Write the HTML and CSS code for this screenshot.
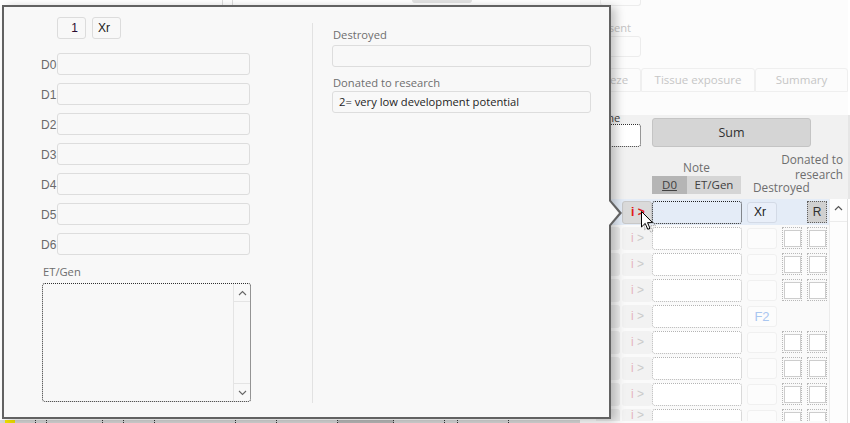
FILE: index.html
```html
<!DOCTYPE html>
<html lang="en">
<head>
  <meta charset="UTF-8">
  <title>Embryo details</title>
  <link rel="stylesheet" href="styles.css">
</head>
<body>
  <div class="app">
    <!-- main area, mostly under the popup -->
    <div class="main">
      <div class="main-top">
        <span class="rule rule-a"></span>
        <span class="rule rule-b"></span>
        <span class="top-btn"></span>
      </div>
      <div class="main-body"></div>
      <div class="main-strip">
        <span class="strip-cell yellow"></span>
        <span class="strip-cell" style="width: 20px"></span>
        <span class="strip-cell" style="width: 10px"></span>
        <span class="strip-cell" style="width: 55px"></span>
        <span class="strip-cell" style="width: 20px"></span>
        <span class="strip-cell" style="width: 30px"></span>
        <span class="strip-cell" style="width: 80px"></span>
        <span class="strip-cell" style="width: 40px"></span>
        <span class="strip-cell" style="width: 60px"></span>
        <span class="strip-cell dark" style="width: 55px"></span>
        <span class="strip-cell" style="width: 50px"></span>
        <span class="strip-cell" style="width: 12px"></span>
        <span class="strip-cell" style="width: 50px"></span>
      </div>
    </div>

    <!-- right side panel -->
    <div class="side">
      <div class="side-top">
        <div class="stub"></div>
        <div class="consent-label">Consent</div>
        <div class="consent-input"></div>
        <div class="tabs">
          <div class="tab" style="width: 61px">Freeze</div>
          <div class="tab" style="width: 114px">Tissue exposure</div>
          <div class="tab" style="width: 93px">Summary</div>
        </div>
      </div>

      <div class="side-mid">
        <div class="mid-row">
          <div class="name-block">
            <div class="name-label">Name</div>
            <div class="name-input"></div>
          </div>
          <div class="sum-btn">Sum</div>
        </div>
        <div class="head-row">
          <div class="note-block">
            <div class="note-title">Note</div>
            <div class="toggle">
              <span class="toggle-on">D0</span>
              <span class="toggle-off">ET/Gen</span>
            </div>
          </div>
          <div class="heads">
            <div class="donated-head">Donated to<br>research</div>
            <div class="destroyed-head">Destroyed</div>
          </div>
        </div>
      </div>

      <div class="table">
        <div class="rows">
          <div class="row selected">
            <span class="lead"></span>
            <span class="info"><b>i</b> &gt;</span>
            <span class="note"></span>
            <span class="mark">Xr</span>
            <span class="chk blank"></span>
            <span class="chk r-btn">R</span>
          </div>
          <div class="row">
            <span class="lead"></span>
            <span class="info"><b>i</b> &gt;</span>
            <span class="note"></span>
            <span class="mark"></span>
            <span class="chk"><i></i></span>
            <span class="chk"><i></i></span>
          </div>
          <div class="row">
            <span class="lead"></span>
            <span class="info"><b>i</b> &gt;</span>
            <span class="note"></span>
            <span class="mark"></span>
            <span class="chk"><i></i></span>
            <span class="chk"><i></i></span>
          </div>
          <div class="row">
            <span class="lead"></span>
            <span class="info"><b>i</b> &gt;</span>
            <span class="note"></span>
            <span class="mark"></span>
            <span class="chk"><i></i></span>
            <span class="chk"><i></i></span>
          </div>
          <div class="row">
            <span class="lead"></span>
            <span class="info"><b>i</b> &gt;</span>
            <span class="note"></span>
            <span class="mark f2">F2</span>
          </div>
          <div class="row">
            <span class="lead"></span>
            <span class="info"><b>i</b> &gt;</span>
            <span class="note"></span>
            <span class="mark"></span>
            <span class="chk"><i></i></span>
            <span class="chk"><i></i></span>
          </div>
          <div class="row">
            <span class="lead"></span>
            <span class="info"><b>i</b> &gt;</span>
            <span class="note"></span>
            <span class="mark"></span>
            <span class="chk"><i></i></span>
            <span class="chk"><i></i></span>
          </div>
          <div class="row">
            <span class="lead"></span>
            <span class="info"><b>i</b> &gt;</span>
            <span class="note"></span>
            <span class="mark"></span>
            <span class="chk"><i></i></span>
            <span class="chk"><i></i></span>
          </div>
          <div class="row last">
            <span class="lead"></span>
            <span class="info"><b>i</b> &gt;</span>
            <span class="note"></span>
            <span class="mark"></span>
            <span class="chk"><i></i></span>
            <span class="chk"><i></i></span>
          </div>
        </div>
        <div class="vscroll">
          <div class="vscroll-up">
            <svg width="9" height="6" viewBox="0 0 9 6"><path d="M1 5 L4.5 1.5 L8 5" fill="none" stroke="#555" stroke-width="1.2"/></svg>
          </div>
        </div>
      </div>
    </div>
  </div>

  <!-- details popup -->
  <div class="popup">
    <div class="pop-left">
      <div class="pop-btns">
        <span class="small-btn num">1</span>
        <span class="small-btn xr">Xr</span>
      </div>
      <div class="day-grid">
        <span class="day-label">D0</span><span class="field"></span>
        <span class="day-label">D1</span><span class="field"></span>
        <span class="day-label">D2</span><span class="field"></span>
        <span class="day-label">D3</span><span class="field"></span>
        <span class="day-label">D4</span><span class="field"></span>
        <span class="day-label">D5</span><span class="field"></span>
        <span class="day-label">D6</span><span class="field"></span>
      </div>
      <div class="memo-label">ET/Gen</div>
      <div class="memo">
        <div class="memo-text"></div>
        <div class="memo-scroll">
          <span class="memo-arrow">
            <svg width="9" height="6" viewBox="0 0 9 6"><path d="M1 5 L4.5 1.5 L8 5" fill="none" stroke="#666" stroke-width="1.1"/></svg>
          </span>
          <span class="memo-track"></span>
          <span class="memo-arrow down">
            <svg width="9" height="6" viewBox="0 0 9 6"><path d="M1 1 L4.5 4.5 L8 1" fill="none" stroke="#666" stroke-width="1.1"/></svg>
          </span>
        </div>
      </div>
    </div>
    <div class="pop-divider"></div>
    <div class="pop-right">
      <div class="pop-label">Destroyed</div>
      <div class="wide-field"></div>
      <div class="pop-label second">Donated to research</div>
      <div class="wide-field filled">2= very low development potential</div>
    </div>
  </div>

  <!-- mouse pointer -->
  <svg class="pointer" width="16" height="22" viewBox="0 0 16 22">
    <path d="M3.5 3.5 L3.5 19 L7.2 15.4 L9.8 21.3 L12 20.3 L9.5 14.6 L14.5 14.6 Z" fill="none" stroke="#9a9a9a" stroke-width="1" stroke-dasharray="1 1"/>
    <path d="M0.5 0.5 L0.5 16 L4.2 12.4 L6.8 18.3 L9 17.3 L6.5 11.6 L11.5 11.6 Z" fill="#fff" stroke="#000" stroke-width="1"/>
  </svg>
</body>
</html>
```

FILE: styles.css
```css
  body {
    margin: 0;
    width: 850px;
    height: 423px;
    overflow: hidden;
    background: #ffffff;
    font-family: 'Open Sans', 'Liberation Sans', sans-serif;
    font-size: 11.2px;
    color: #6e6e6e;
    position: relative;
  }

  .app {
    display: flex;
    height: 423px;
  }

  /* main area */
  .main {
    width: 580px;
    display: flex;
    flex-direction: column;
  }

  .main-top {
    display: flex;
    height: 5px;
  }

  .rule {
    width: 1px;
    background: #dcdcdc;
  }

  .rule-a { margin-left: 222px; }
  .rule-b { margin-left: 9px; }

  .top-btn {
    margin-left: 179px;
    width: 60px;
    height: 3px;
    background: #e2e2e2;
    border-radius: 0 0 3px 3px;
  }

  .main-body {
    flex: 1;
  }

  .main-strip {
    display: flex;
    height: 3px;
    background: #d6d6d6;
  }

  .strip-cell {
    border-right: 1px dotted #333;
  }

  .strip-cell.yellow {
    width: 10px;
    margin-left: 5px;
    background: #f2e200;
    border-right: none;
  }

  .strip-cell.dark {
    background: #b8b8b8;
  }

  /* right side panel */
  .side {
    width: 270px;
    display: flex;
    flex-direction: column;
  }

  .side-top {
    height: 115px;
    background: #fcfcfc;
    box-sizing: border-box;
    border-right: 2px solid #fff;
  }

  .stub {
    margin-left: 20px;
    width: 41px;
    height: 6px;
    box-sizing: border-box;
    border: 1px solid #ececec;
    border-top: none;
    border-radius: 0 0 3px 3px;
  }

  .consent-label {
    margin: 14px 0 0 8px;
    line-height: 15px;
    color: #c4c4c4;
  }

  .consent-input {
    margin: 1px 0 0 20px;
    width: 41px;
    height: 21px;
    box-sizing: border-box;
    border: 1px solid #ececec;
    border-radius: 3px;
  }

  .tabs {
    display: flex;
    margin-top: 11px;
    height: 24px;
  }

  .tab {
    box-sizing: border-box;
    border: 1px solid #efefef;
    border-radius: 3px 3px 0 0;
    text-align: center;
    line-height: 22px;
    color: #c6c6c6;
    font-size: 11.5px;
  }

  .side-mid {
    height: 84px;
    background: #f1f1f1;
    border-right: 2px solid #e6e6e6;
  }

  .mid-row {
    display: flex;
    height: 35px;
  }

  .name-block {
    width: 72px;
  }

  .name-label {
    margin: -4px 0 0 9px;
    line-height: 13px;
    color: #404040;
  }

  .name-input {
    margin-left: 20px;
    width: 41px;
    height: 23px;
    box-sizing: border-box;
    border: 1px dotted #303030;
    border-radius: 3px;
    background: #ffffff;
  }

  .sum-btn {
    margin-top: 3px;
    width: 159px;
    height: 29px;
    box-sizing: border-box;
    background: #d5d5d5;
    border: 1px solid #c4c4c4;
    border-radius: 3px;
    text-align: center;
    line-height: 27px;
    font-size: 12.5px;
    color: #303030;
  }

  .head-row {
    display: flex;
    height: 49px;
    box-sizing: border-box;
    padding-bottom: 5px;
  }

  .note-block {
    margin-left: 72px;
    width: 89px;
    align-self: flex-end;
  }

  .note-title {
    text-align: center;
    line-height: 15px;
    font-size: 11.8px;
  }

  .toggle {
    display: flex;
    margin-top: 1px;
    height: 18px;
    line-height: 18px;
    font-size: 11.5px;
    color: #404040;
  }

  .toggle-on {
    width: 35px;
    text-align: center;
    background: #b5b5b5;
    text-decoration: underline;
  }

  .toggle-off {
    flex: 1;
    text-align: center;
    background: #d5d5d5;
  }

  .heads {
    flex: 1;
    display: flex;
    flex-direction: column;
    padding-top: 2px;
  }

  .donated-head {
    text-align: right;
    padding-right: 5px;
    line-height: 15px;
    font-size: 11.8px;
  }

  .destroyed-head {
    margin: -2px 0 0 12px;
    line-height: 14px;
    font-size: 11.8px;
  }

  /* table rows */
  .table {
    flex: 1;
    display: flex;
    overflow: hidden;
  }

  .rows {
    width: 249px;
    background: #fafafa;
    font-family: 'Liberation Sans', Arial, sans-serif;
    font-size: 12px;
  }

  .row {
    display: flex;
    align-items: flex-start;
    height: 26px;
    box-sizing: border-box;
    padding-top: 2px;
  }

  .row.last {
    height: 14px;
    overflow: hidden;
  }

  .row.selected {
    background: #e4ecf7;
  }

  .lead {
    margin-left: 16px;
    width: 24px;
    height: 23px;
    background: #ececec;
    border-radius: 3px;
  }

  .row.selected .lead {
    background: transparent;
  }

  .info {
    margin-left: 2px;
    width: 30px;
    height: 23px;
    box-sizing: border-box;
    padding-left: 9px;
    line-height: 23px;
    background: #f2f2f2;
    border-radius: 3px;
    color: #cacaca;
  }

  .row.last .info {
    height: 12px;
    line-height: 12px;
    padding-top: 0;
    border-radius: 3px 3px 0 0;
  }

  .info b {
    font-weight: normal;
    color: #e6b4c0;
  }

  .row.selected .info {
    background: #dadada;
    border: 1px solid #c8c8c8;
    padding-left: 8px;
    line-height: 21px;
    color: #e01818;
    font-weight: bold;
  }

  .row.selected .info b {
    font-weight: bold;
    color: #e01818;
  }

  .note {
    width: 90px;
    height: 23px;
    box-sizing: border-box;
    border: 1px dotted #b4b4b4;
    border-radius: 3px;
    background: #ffffff;
  }

  .row.selected .note {
    border-color: #202020;
    background: transparent;
  }

  .mark {
    margin: 1px 0 0 5px;
    width: 30px;
    height: 21px;
    box-sizing: border-box;
    border: 1px solid #f0f0f0;
    border-radius: 3px;
    background: #fcfcfc;
    text-align: center;
    line-height: 19px;
  }

  .row.selected .mark {
    background: #e9eff9;
    border-color: #d3dae6;
    color: #1a1a1a;
    text-align: left;
    padding-left: 6px;
  }

  .mark.f2 {
    color: #a9c6f0;
    font-size: 13px;
  }

  .chk {
    margin-left: 5px;
    width: 20px;
    height: 22px;
    box-sizing: border-box;
    border: 1px dotted #b8b8b8;
    display: flex;
    align-items: center;
    justify-content: center;
  }

  .chk i {
    width: 17px;
    height: 17px;
    box-sizing: border-box;
    border: 1px solid #cdcdcd;
    background: #ffffff;
  }

  .chk.blank {
    border-color: transparent;
  }

  .chk.r-btn {
    border-color: #606060;
    background: #d0d0d0;
    color: #303030;
    font-size: 12px;
  }

  .vscroll {
    width: 19px;
    box-sizing: border-box;
    border-left: 1px solid #ebebeb;
    border-right: 1px solid #e0e0e0;
    background: #fdfdfd;
    margin-right: 2px;
  }

  .vscroll-up {
    margin-top: 1px;
    height: 22px;
    border-bottom: 1px solid #ececec;
    display: flex;
    align-items: flex-start;
    justify-content: center;
    padding-top: 5px;
    box-sizing: border-box;
  }

  /* popup */
  .popup {
    position: absolute;
    left: 2px;
    top: 5px;
    width: 609px;
    height: 414px;
    box-sizing: border-box;
    border: 2px solid #626262;
    background: #f8f8f8;
    box-shadow: 5px 2px 9px rgba(0, 0, 0, 0.22);
    display: flex;
  }

  .popup::before {
    content: '';
    position: absolute;
    left: 100%;
    top: 191px;
    border-left: 13px solid #626262;
    border-top: 15px solid transparent;
    border-bottom: 15px solid transparent;
  }

  .popup::after {
    content: '';
    position: absolute;
    left: 100%;
    top: 194px;
    border-left: 10px solid #f8f8f8;
    border-top: 12px solid transparent;
    border-bottom: 12px solid transparent;
  }

  .pop-left {
    width: 308px;
    padding-top: 10px;
  }

  .pop-btns {
    display: flex;
    gap: 6px;
    margin-left: 53px;
  }

  .small-btn {
    width: 29px;
    height: 22px;
    box-sizing: border-box;
    border: 1px solid #dcdcdc;
    border-radius: 3px;
    font-family: 'Liberation Sans', Arial, sans-serif;
    font-size: 12px;
    line-height: 20px;
  }

  .small-btn.num {
    text-align: right;
    padding-right: 7px;
    color: #2a0c30;
  }

  .small-btn.xr {
    padding-left: 5px;
    color: #1a1a1a;
  }

  .day-grid {
    display: grid;
    grid-template-columns: 17px 193px;
    grid-auto-rows: 22px;
    row-gap: 8px;
    margin: 14px 0 0 36px;
  }

  .day-label {
    font-family: 'Liberation Sans', Arial, sans-serif;
    font-size: 12px;
    line-height: 24px;
    color: #6a6a6a;
    padding-left: 1px;
  }

  .field {
    box-sizing: border-box;
    border: 1px solid #dddddd;
    border-radius: 3px;
  }

  .memo-label {
    margin: 9px 0 0 39px;
    line-height: 15px;
  }

  .memo {
    display: flex;
    margin: 4px 0 0 38px;
    width: 209px;
    height: 119px;
    box-sizing: border-box;
    border: 1px dotted #303030;
    border-radius: 3px;
  }

  .memo-text {
    flex: 1;
  }

  .memo-scroll {
    width: 16px;
    display: flex;
    flex-direction: column;
    border-left: 1px solid #e4e4e4;
  }

  .memo-arrow {
    height: 17px;
    display: flex;
    align-items: center;
    justify-content: center;
    border-bottom: 1px solid #e4e4e4;
  }

  .memo-arrow.down {
    border-bottom: none;
    border-top: 1px solid #e4e4e4;
  }

  .memo-track {
    flex: 1;
  }

  .pop-divider {
    width: 1px;
    margin: 16px 0 14px;
    background: #e2e2e2;
  }

  .pop-right {
    flex: 1;
    padding: 20px 0 0 20px;
  }

  .pop-label {
    line-height: 15px;
    margin-bottom: 3px;
  }

  .pop-label.second {
    margin-top: 8px;
    margin-bottom: 1px;
  }

  .wide-field {
    width: 259px;
    height: 22px;
    box-sizing: border-box;
    border: 1px solid #dddddd;
    border-radius: 3px;
    padding-left: 6px;
    line-height: 20px;
    color: #1e1e1e;
    margin-left: -1px;
  }

  /* mouse pointer over the selected row */
  .pointer {
    position: absolute;
    left: 641px;
    top: 211px;
  }
```
